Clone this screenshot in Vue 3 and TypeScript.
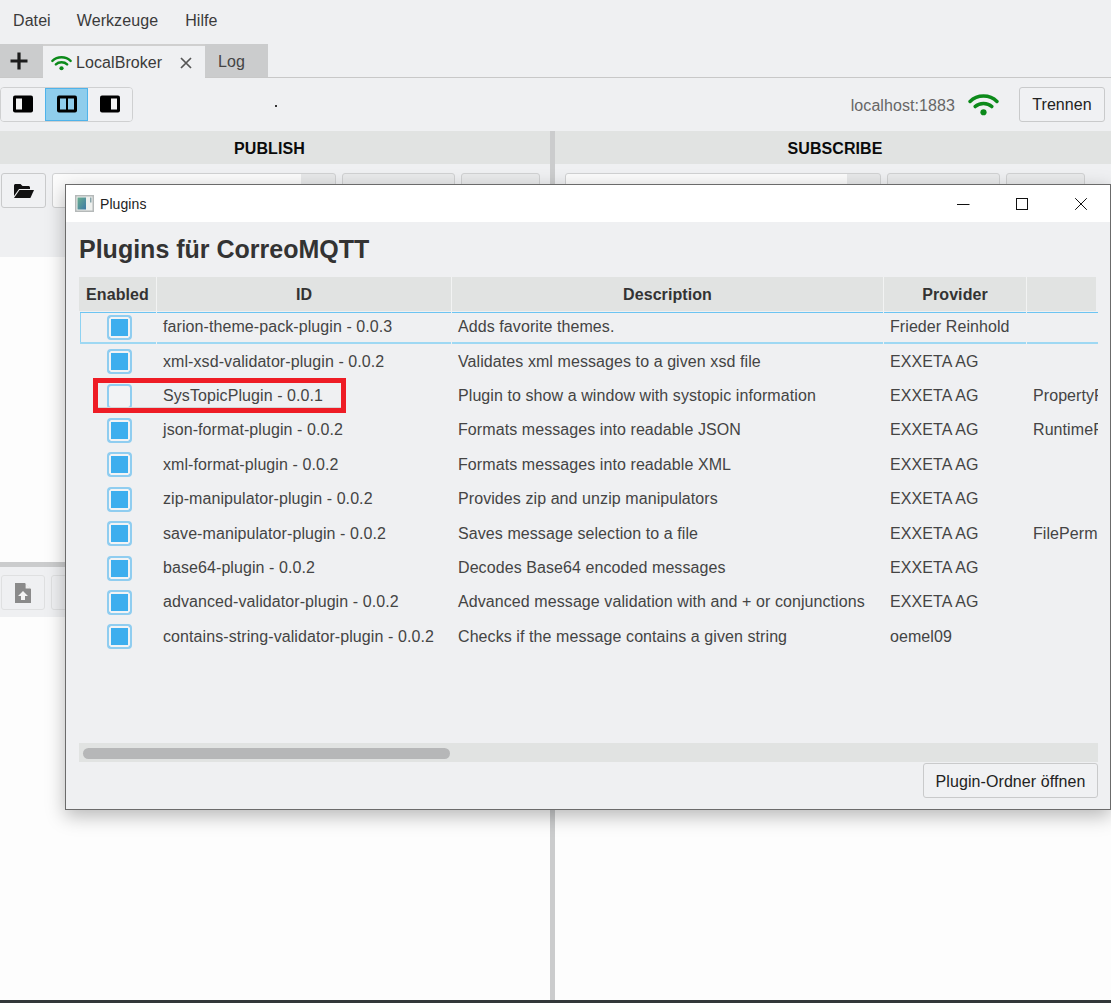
<script setup lang="ts">
interface Plugin {
  id: string
  description: string
  provider: string
  extra: string
  enabled: boolean
}

const plugins: Plugin[] = [
  { id: 'farion-theme-pack-plugin - 0.0.3', description: 'Adds favorite themes.', provider: 'Frieder Reinhold', extra: '', enabled: true },
  { id: 'xml-xsd-validator-plugin - 0.0.2', description: 'Validates xml messages to a given xsd file', provider: 'EXXETA AG', extra: '', enabled: true },
  { id: 'SysTopicPlugin - 0.0.1', description: 'Plugin to show a window with systopic information', provider: 'EXXETA AG', extra: 'PropertyPermission', enabled: false },
  { id: 'json-format-plugin - 0.0.2', description: 'Formats messages into readable JSON', provider: 'EXXETA AG', extra: 'RuntimePermission', enabled: true },
  { id: 'xml-format-plugin - 0.0.2', description: 'Formats messages into readable XML', provider: 'EXXETA AG', extra: '', enabled: true },
  { id: 'zip-manipulator-plugin - 0.0.2', description: 'Provides zip and unzip manipulators', provider: 'EXXETA AG', extra: '', enabled: true },
  { id: 'save-manipulator-plugin - 0.0.2', description: 'Saves message selection to a file', provider: 'EXXETA AG', extra: 'FilePermission', enabled: true },
  { id: 'base64-plugin - 0.0.2', description: 'Decodes Base64 encoded messages', provider: 'EXXETA AG', extra: '', enabled: true },
  { id: 'advanced-validator-plugin - 0.0.2', description: 'Advanced message validation with and + or conjunctions', provider: 'EXXETA AG', extra: '', enabled: true },
  { id: 'contains-string-validator-plugin - 0.0.2', description: 'Checks if the message contains a given string', provider: 'oemel09', extra: '', enabled: true },
]
</script>

<template>
  <div class="app">
    <nav class="menu">
      <span>Datei</span>
      <span>Werkzeuge</span>
      <span class="menu-last">Hilfe</span>
    </nav>

    <div class="tabs">
      <div class="tab tab-add">
        <svg width="20" height="20" viewBox="0 0 20 20"><path d="M8.4 1.5h3.2v6.9h6.9v3.2h-6.9v6.9H8.4v-6.9H1.5V8.4h6.9z" fill="#1c1c1c" /></svg>
      </div>
      <div class="tab tab-active">
        <svg class="wifi-small" width="21" height="16" viewBox="0 0 30 22">
          <path d="M2 8 C9 1 21 1 28 8 M7 13 C11 9 19 9 23 13" fill="none" stroke="#0c8a1a" stroke-width="3.4" stroke-linecap="round" />
          <circle cx="15" cy="18.5" r="3" fill="#0c8a1a" />
        </svg>
        <span class="tab-label">LocalBroker</span>
        <svg class="tab-close" width="12" height="12" viewBox="0 0 12 12"><path d="M1 1l10 10M11 1L1 11" stroke="#555" stroke-width="1.7" /></svg>
      </div>
      <div class="tab tab-log">Log</div>
      <div class="tab-rule"></div>
    </div>

    <div class="toolbar">
      <div class="segmented">
        <button class="seg">
          <svg width="20" height="18" viewBox="0 0 20 18"><rect width="20" height="17" y="0.5" rx="2" fill="#000" /><rect x="3" y="3.5" width="6" height="11" fill="#f3f3f3" /></svg>
        </button>
        <button class="seg seg-on">
          <svg width="20" height="18" viewBox="0 0 20 18"><rect width="20" height="17" y="0.5" rx="2" fill="#000" /><rect x="3" y="3.5" width="6" height="11" fill="#8fcdec" /><rect x="11" y="3.5" width="6" height="11" fill="#8fcdec" /></svg>
        </button>
        <button class="seg">
          <svg width="20" height="18" viewBox="0 0 20 18"><rect width="20" height="17" y="0.5" rx="2" fill="#000" /><rect x="11" y="3.5" width="6" height="11" fill="#f3f3f3" /></svg>
        </button>
      </div>
      <span class="dot"></span>
      <span class="host">localhost:1883</span>
      <svg class="wifi-big" width="31" height="23" viewBox="0 0 30 22">
        <path d="M2 8 C9 1 21 1 28 8 M7 13 C11 9 19 9 23 13" fill="none" stroke="#0c8a1a" stroke-width="3.4" stroke-linecap="round" />
        <circle cx="15" cy="18.5" r="3" fill="#0c8a1a" />
      </svg>
      <button class="btn disconnect">Trennen</button>
    </div>

    <main class="split">
      <section class="pane pane-left">
        <h2 class="pane-head head-left">PUBLISH</h2>
        <div class="pane-tools pane-tools-tall">
          <button class="btn icon-btn">
            <svg width="20" height="16" viewBox="0 0 20 16"><path d="M0 2.5C0 1.6.7 1 1.5 1h5l2 2h6c.8 0 1.5.6 1.5 1.5V6H5L0 13z" fill="#111" /><path d="M5.5 7H20l-3.6 8H0z" fill="#111" /></svg>
          </button>
          <div class="combo"></div>
          <div class="ghost g1"></div>
          <div class="ghost g2"></div>
        </div>
        <div class="pane-white top-white"></div>
        <div class="hsplit"></div>
        <div class="pane-tools pane-tools-low">
          <button class="btn icon-btn faded">
            <svg width="16" height="20" viewBox="0 0 16 20"><path d="M0 0h10l6 6v14H0z" fill="#8a8a8a" /><path d="M10.6 0L16 5.4h-5.4z" fill="#eee" /><path d="M8 8l5 5h-3v4H6v-4H3z" fill="#f4f4f4" /></svg>
          </button>
          <div class="ghost g3"></div>
        </div>
        <div class="pane-white fill"></div>
      </section>
      <div class="vsplit"></div>
      <section class="pane pane-right">
        <h2 class="pane-head head-right">SUBSCRIBE</h2>
        <div class="pane-tools pane-tools-right">
          <div class="combo combo-right"></div>
          <div class="ghost g1"></div>
          <div class="ghost g2"></div>
        </div>
        <div class="pane-white fill"></div>
      </section>
    </main>
    <div class="status-line"></div>

    <div class="dialog">
      <header class="titlebar">
        <svg class="app-icon" width="19" height="17" viewBox="0 0 19 17">
          <rect x="0.75" y="0.75" width="17.5" height="15.5" fill="#eef0ee" stroke="#b5b9b9" stroke-width="1.5" />
          <defs><linearGradient id="iconGrad" x1="0" y1="0" x2="1" y2="1"><stop offset="0" stop-color="#6bae8f" /><stop offset="1" stop-color="#3f7aa6" /></linearGradient></defs>
          <rect x="2.5" y="2.5" width="8.5" height="12" fill="url(#iconGrad)" />
          <rect x="15" y="2.5" width="1.5" height="5" fill="#8aa5aa" />
        </svg>
        <span class="title-text">Plugins</span>
        <div class="win-buttons">
          <svg width="14" height="14" viewBox="0 0 14 14"><path d="M1 7.5h12.5" stroke="#111" stroke-width="1" /></svg>
          <svg width="14" height="14" viewBox="0 0 14 14"><rect x="1.5" y="1.5" width="11" height="11" fill="none" stroke="#111" stroke-width="1" /></svg>
          <svg width="14" height="14" viewBox="0 0 14 14"><path d="M1.2 1.2l11.6 11.6M12.8 1.2L1.2 12.8" stroke="#111" stroke-width="1" /></svg>
        </div>
      </header>

      <div class="dialog-body">
        <h1 class="dialog-title">Plugins für CorreoMQTT</h1>

        <div class="table">
          <div class="thead">
            <div class="th c-enabled">Enabled</div>
            <div class="th c-id">ID</div>
            <div class="th c-desc">Description</div>
            <div class="th c-prov">Provider</div>
            <div class="th c-extra"></div>
          </div>
          <div class="tbody">
            <div
              v-for="(p, i) in plugins"
              :key="p.id"
              class="row"
              :class="{ 'row-selected': i === 0 }"
            >
              <div class="td c-enabled">
                <span class="check" :class="{ 'check-on': p.enabled }"></span>
              </div>
              <div class="td c-id">{{ p.id }}</div>
              <div class="td c-desc">{{ p.description }}</div>
              <div class="td c-prov">{{ p.provider }}</div>
              <div class="td c-extra">{{ p.extra }}</div>
            </div>
            <div class="highlight"></div>
          </div>
          <div class="scrollbar"><div class="thumb"></div></div>
        </div>

        <div class="dialog-foot">
          <button class="btn open-folder">Plugin-Ordner öffnen</button>
        </div>
      </div>
    </div>
  </div>
</template>

<style>
html, body { margin: 0; background: #fdfdfd; }
</style>

<style scoped>
.app {
  position: relative;
  width: 1111px;
  height: 1003px;
  overflow: hidden;
  background: #eff0f2;
  font-family: "Liberation Sans", Arial, sans-serif;
  font-size: 16px;
  letter-spacing: 0.08px;
  color: #333;
  display: flex;
  flex-direction: column;
}
.menu {
  height: 44px;
  flex: none;
  display: flex;
  align-items: center;
  gap: 26px;
  padding: 0 0 3px 13px;
  box-sizing: border-box;
  color: #3a3a3a;
}
.menu-last { margin-left: 1px; }
.tabs {
  height: 34px;
  flex: none;
  display: flex;
  align-items: stretch;
}
.tab {
  display: flex;
  align-items: center;
  box-sizing: border-box;
  background: #cbcccd;
}
.tab-add {
  width: 43px;
  padding-left: 9px;
  border-bottom: 1px solid #c8c8c8;
}
.tab-active {
  width: 162px;
  background: #eff0f2;
  border-top: 2px solid #cfcfcf;
  padding: 1px 0 0 8px;
}
.wifi-small { flex: none; }
.tab-label { margin-left: 4px; width: 104px; color: #3a3a3a; }
.tab-log {
  width: 63px;
  padding: 2px 0 0 13px;
  color: #444;
  border-bottom: 1px solid #c8c8c8;
}
.tab-rule { flex: 1; border-bottom: 1px solid #c8c8c8; }
.toolbar {
  height: 53px;
  flex: none;
  display: flex;
  align-items: center;
  box-sizing: border-box;
  padding: 0 6px 1px 0;
}
.segmented {
  display: flex;
  width: 133px;
  height: 35px;
  box-sizing: border-box;
  border: 1px solid #cfd0d1;
  border-radius: 4px;
  overflow: hidden;
}
.seg {
  flex: 1;
  padding: 0;
  border: 0;
  background: #f0f1f3;
  display: flex;
  align-items: center;
  justify-content: center;
}
.seg-on {
  background: #8fcdec;
  box-shadow: inset 0 0 0 1px #4fb3ea;
}
.dot {
  width: 2px;
  height: 2px;
  background: #333;
  margin-left: 142px;
  margin-top: 3px;
}
.host {
  margin-left: auto;
  padding-top: 3px;
  color: #666;
}
.wifi-big { margin: 0 20px 0 13px; }
.btn {
  font: inherit;
  letter-spacing: inherit;
  color: #222;
  background: #f0f1f3;
  border: 1px solid #c9cacb;
  border-radius: 3px;
  box-sizing: border-box;
  padding: 0;
}
.disconnect { width: 86px; height: 35px; padding-top: 2px; }
.split {
  flex: 1;
  min-height: 0;
  display: flex;
}
.pane { display: flex; flex-direction: column; min-width: 0; }
.pane-left { width: 550px; flex: none; }
.pane-right { flex: 1; }
.vsplit { width: 5px; flex: none; background: #cbcccd; }
.pane-head {
  margin: 0;
  height: 33px;
  flex: none;
  box-sizing: border-box;
  background: #e1e3e2;
  color: #0a0a0a;
  font-size: 16px;
  font-weight: 700;
  line-height: 35px;
  text-align: center;
}
.head-left { padding-right: 11px; }
.head-right { padding-left: 4px; }
.pane-tools {
  flex: none;
  display: flex;
  gap: 6px;
  box-sizing: border-box;
  align-items: flex-start;
  padding: 9px 10px 0 1px;
}
.pane-tools-tall { height: 93px; }
.pane-tools-low { height: 50px; padding-top: 8px; gap: 6px; }
.pane-tools-right { height: 93px; padding-left: 10px; }
.icon-btn {
  width: 45px;
  height: 35px;
  display: flex;
  align-items: center;
  justify-content: center;
}
.faded { width: 44px; background: #eff0f2; border-color: #dfe0e1; }
.combo {
  width: 284px;
  height: 35px;
  box-sizing: border-box;
  border: 1px solid #d0d1d2;
  border-radius: 3px;
  background: linear-gradient(90deg, #fbfbfb 0 248px, #e7e8e9 248px);
}
.combo-right { width: 316px; background: linear-gradient(90deg, #fbfbfb 0 281px, #e7e8e9 281px); }
.ghost {
  height: 35px;
  box-sizing: border-box;
  border: 1px solid #d0d1d2;
  border-radius: 3px;
  background: #e9eaeb;
}
.g1 { width: 113px; }
.g2 { width: 79px; }
.g3 { width: 44px; background: #eff0f2; border-color: #dfe0e1; }
.pane-white { background: #fdfdfd; }
.top-white { height: 305px; flex: none; }
.hsplit { height: 5px; flex: none; background: #cbcccd; }
.fill { flex: 1; }
.status-line { height: 3px; flex: none; background: #33383a; }

.dialog {
  position: absolute;
  left: 65px;
  top: 184px;
  width: 1046px;
  height: 626px;
  box-sizing: border-box;
  border: 1px solid #6b6b6b;
  background: #eff0f2;
  box-shadow: 0 6px 18px rgba(0, 0, 0, 0.28);
  display: flex;
  flex-direction: column;
}
.titlebar {
  height: 37px;
  flex: none;
  background: #fff;
  display: flex;
  align-items: center;
  padding-left: 9px;
}
.title-text { margin-left: 6px; font-size: 14px; color: #222; }
.win-buttons {
  margin-left: auto;
  display: flex;
  gap: 45px;
  padding-right: 22px;
}
.dialog-body {
  flex: 1;
  min-height: 0;
  display: flex;
  flex-direction: column;
  padding: 0 12px 0 13px;
}
.dialog-title {
  margin: 0;
  height: 55px;
  flex: none;
  font-size: 25px;
  font-weight: 700;
  letter-spacing: 0;
  line-height: 54px;
  color: #333;
}
.table {
  flex: none;
  height: 485px;
  display: flex;
  flex-direction: column;
  overflow: hidden;
}
.thead { height: 34px; flex: none; display: flex; margin-right: 2px; }
.th {
  background: #e1e3e2;
  box-sizing: border-box;
  line-height: 36px;
  font-weight: 700;
  text-align: center;
  color: #333;
  border-right: 1px solid #f2f3f3;
}
.th:last-child { border-right: 0; }
.c-enabled { width: 78px; flex: none; }
.c-id { width: 295px; flex: none; }
.c-desc { width: 432px; flex: none; }
.c-prov { width: 143px; flex: none; }
.c-extra { flex: 1; min-width: 0; }
.tbody { position: relative; flex: 1; min-height: 0; }
.row {
  height: 34.4px;
  display: flex;
  align-items: center;
  box-sizing: border-box;
}
.row-selected {
  align-items: stretch;
  height: 32px;
  margin: 1px 0 0.5px;
}
.row-selected .td {
  display: flex;
  align-items: center;
  padding-bottom: 2px;
  background:
    linear-gradient(#6cc4f2, #6cc4f2) left top / calc(100% - 1px) 1px no-repeat,
    linear-gradient(#9ed8f3, #9ed8f3) left bottom / calc(100% - 1px) 2px no-repeat;
}
.row-selected .td.c-enabled {
  background:
    linear-gradient(#6cc4f2, #6cc4f2) 1px top / calc(100% - 2px) 1px no-repeat,
    linear-gradient(#9ed8f3, #9ed8f3) 1px bottom / calc(100% - 2px) 2px no-repeat,
    linear-gradient(#8ed2f2, #8ed2f2) 1px top / 1px 100% no-repeat;
}
.row-selected .td.c-extra {
  background:
    linear-gradient(#6cc4f2, #6cc4f2) left top / 100% 1px no-repeat,
    linear-gradient(#9ed8f3, #9ed8f3) left bottom / 100% 2px no-repeat;
}
.td {
  box-sizing: border-box;
  padding-left: 6px;
  white-space: nowrap;
  overflow: hidden;
  color: #444;
}
.td.c-enabled { display: flex; justify-content: center; padding-left: 2px; }
.check {
  width: 25px;
  height: 25px;
  box-sizing: border-box;
  border: 2px solid #8fcdf0;
  border-radius: 4px;
  background: #f2f3f5;
}
.check-on {
  background: #3daeee;
  box-shadow: inset 0 0 0 2px #f2f3f5;
}
.highlight {
  position: absolute;
  left: 14px;
  top: 67px;
  width: 253px;
  height: 35px;
  box-sizing: border-box;
  border: 5px solid #ee1c25;
  box-shadow: inset 0 -1px 0 #d4d5d6;
}
.scrollbar {
  height: 19px;
  flex: none;
  margin-top: auto;
  box-sizing: border-box;
  padding: 1px 0 0 4px;
  background: #e1e3e2;
  display: flex;
  align-items: center;
}
.thumb { width: 367px; height: 11px; border-radius: 6px; background: #b6b7b8; }
.dialog-foot {
  flex: 1;
  display: flex;
  justify-content: flex-end;
  align-items: flex-start;
  padding-top: 1px;
}
.open-folder { width: 175px; height: 35px; padding-top: 2px; }
</style>
